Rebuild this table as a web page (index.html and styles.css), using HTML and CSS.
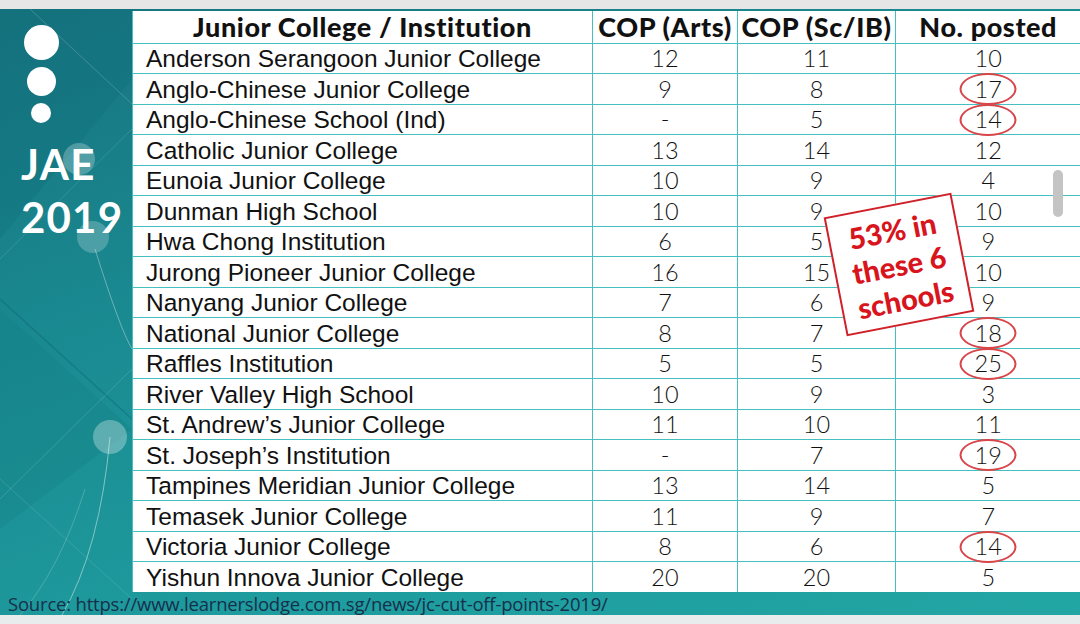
FILE: index.html
```html
<!DOCTYPE html>
<html>
<head>
<meta charset="utf-8">
<link rel="stylesheet" href="styles.css">
</head>
<body>
<div class="topstrip"></div>
<div class="slide">
  <svg class="deco" width="1080" height="606" viewBox="0 0 1080 606">
    <polygon points="0,0 132,0 132,70 0,230" fill="#0f6f7a" opacity="0.35"/>
    <polygon points="0,300 132,420 0,520" fill="#0e7a80" opacity="0.25"/>
    <line x1="30" y1="0" x2="132" y2="95" stroke="#ffffff" stroke-opacity="0.18" stroke-width="1"/>
    <line x1="0" y1="250" x2="132" y2="120" stroke="#ffffff" stroke-opacity="0.12" stroke-width="1"/>
    <line x1="0" y1="290" x2="132" y2="410" stroke="#0a5f68" stroke-opacity="0.35" stroke-width="1.5"/>
    <line x1="0" y1="490" x2="132" y2="360" stroke="#ffffff" stroke-opacity="0.15" stroke-width="1"/>
    <line x1="0" y1="470" x2="132" y2="590" stroke="#ffffff" stroke-opacity="0.12" stroke-width="1"/>
    <path d="M95 240 Q120 320 132 340" stroke="#ffffff" stroke-opacity="0.35" fill="none" stroke-width="1"/>
    <path d="M110 428 Q100 540 62 606" stroke="#ffffff" stroke-opacity="0.45" fill="none" stroke-width="1"/>
    <path d="M20 606 Q60 560 85 480" stroke="#ffffff" stroke-opacity="0.2" fill="none" stroke-width="1"/>
    <circle cx="79" cy="150" r="16" fill="#ffffff" fill-opacity="0.25"/>
    <circle cx="93" cy="228" r="16" fill="#ffffff" fill-opacity="0.22"/>
    <circle cx="110" cy="428" r="17" fill="#ffffff" fill-opacity="0.3"/>
  </svg>
  <div class="body">
    <aside class="side">
      <div class="dots">
        <span class="dot d1"></span>
        <span class="dot d2"></span>
        <span class="dot d3"></span>
      </div>
      <div class="title">JAE<br>2019</div>
    </aside>
    <div class="tablewrap">
      <table class="data">
        <colgroup>
          <col class="c1"><col class="c2"><col class="c3"><col class="c4">
        </colgroup>
        <thead>
          <tr><th>Junior College / Institution</th><th>COP (Arts)</th><th>COP (Sc/IB)</th><th>No. posted</th></tr>
        </thead>
        <tbody>
          <tr><td class="nm">Anderson Serangoon Junior College</td><td>12</td><td>11</td><td>10</td></tr>
          <tr><td class="nm">Anglo-Chinese Junior College</td><td>9</td><td>8</td><td><span class="ring">17</span></td></tr>
          <tr><td class="nm">Anglo-Chinese School (Ind)</td><td>-</td><td>5</td><td><span class="ring">14</span></td></tr>
          <tr><td class="nm">Catholic Junior College</td><td>13</td><td>14</td><td>12</td></tr>
          <tr><td class="nm">Eunoia Junior College</td><td>10</td><td>9</td><td>4</td></tr>
          <tr><td class="nm">Dunman High School</td><td>10</td><td>9</td><td>10</td></tr>
          <tr><td class="nm">Hwa Chong Institution</td><td>6</td><td>5</td><td>9</td></tr>
          <tr><td class="nm">Jurong Pioneer Junior College</td><td>16</td><td>15</td><td>10</td></tr>
          <tr><td class="nm">Nanyang Junior College</td><td>7</td><td>6</td><td>9</td></tr>
          <tr><td class="nm">National Junior College</td><td>8</td><td>7</td><td><span class="ring">18</span></td></tr>
          <tr><td class="nm">Raffles Institution</td><td>5</td><td>5</td><td><span class="ring">25</span></td></tr>
          <tr><td class="nm">River Valley High School</td><td>10</td><td>9</td><td>3</td></tr>
          <tr><td class="nm">St. Andrew’s Junior College</td><td>11</td><td>10</td><td>11</td></tr>
          <tr><td class="nm">St. Joseph’s Institution</td><td>-</td><td>7</td><td><span class="ring">19</span></td></tr>
          <tr><td class="nm">Tampines Meridian Junior College</td><td>13</td><td>14</td><td>5</td></tr>
          <tr><td class="nm">Temasek Junior College</td><td>11</td><td>9</td><td>7</td></tr>
          <tr><td class="nm">Victoria Junior College</td><td>8</td><td>6</td><td><span class="ring">14</span></td></tr>
          <tr><td class="nm">Yishun Innova Junior College</td><td>20</td><td>20</td><td>5</td></tr>
        </tbody>
      </table>
      <div class="stamp">53% in<br>these 6<br>schools</div>
      <div class="scrollthumb"></div>
    </div>
  </div>
  <div class="source">Source: https://www.learnerslodge.com.sg/news/jc-cut-off-points-2019/</div>
</div>
<div class="botstrip"></div>
</body>
</html>
```

FILE: styles.css
```css
html, body {
  margin: 0;
  padding: 0;
  width: 1080px;
  height: 624px;
  overflow: hidden;
  background: #e8e8e8;
}

.topstrip {
  height: 9px;
  background: #e6e6e6;
}

.botstrip {
  height: 9px;
  background: #e9ecec;
}

.slide {
  position: relative;
  height: 606px;
  background: linear-gradient(160deg, #17727e 0%, #1a8a91 35%, #1e9c9e 70%, #22a6a4 100%);
  display: flex;
  flex-direction: column;
}

.deco {
  position: absolute;
  left: 0;
  top: 0;
}

.body {
  position: relative;
  display: flex;
  padding-top: 2px;
}

.side {
  width: 132px;
  flex: none;
  display: flex;
  flex-direction: column;
  align-items: flex-start;
}

.dots {
  width: 82px;
  display: flex;
  flex-direction: column;
  align-items: center;
  gap: 7px;
  padding-top: 14px;
}

.dot {
  display: block;
  background: #ffffff;
  border-radius: 50%;
}
.d1 { width: 35px; height: 35px; }
.d2 { width: 29px; height: 29px; }
.d3 { width: 20px; height: 20px; }

.title {
  margin-top: 15px;
  padding-left: 21px;
  font-family: "Lato", "Liberation Sans", sans-serif;
  font-weight: 700;
  font-size: 42px;
  line-height: 53px;
  color: #ffffff;
  letter-spacing: 1.2px;
}

.tablewrap {
  position: relative;
  flex: 1;
}

.data {
  width: 948px;
  border-collapse: collapse;
  background: #ffffff;
  table-layout: fixed;
  color: #111111;
}

.c1 { width: 460px; }
.c2 { width: 145px; }
.c3 { width: 158px; }
.c4 { width: 185px; }

.data th, .data td {
  border: 1.5px solid #45bfc0;
  padding: 0;
  text-align: center;
  white-space: nowrap;
}

.data tr:first-child th { border-top: none; }
.data th:last-child, .data td:last-child { border-right: none; }
.data tr:last-child td { border-bottom: none; }

.data thead tr { height: 32px; }
.data tbody tr { height: 30.5px; }

.data th {
  font-family: "Lato", "Liberation Sans", sans-serif;
  font-weight: 900;
  font-size: 27px;
  line-height: 28px;
  letter-spacing: 0.6px;
}

.data td {
  padding-top: 1px;
  font-family: "Lato", "Liberation Sans", sans-serif;
  font-weight: 300;
  font-size: 23.5px;
  line-height: 27px;
}

.data td.nm {
  text-align: left;
  padding-left: 13px;
  font-family: "Liberation Sans", Arial, sans-serif;
  font-weight: 400;
  font-size: 24.5px;
  line-height: 27px;
}

.ring {
  position: relative;
  display: inline-block;
}

.ring::after {
  content: "";
  position: absolute;
  left: 50%;
  top: 50%;
  width: 53px;
  height: 28px;
  transform: translate(-50%, -50%);
  border: 2.5px solid #d8464a;
  border-radius: 50%;
}

.stamp {
  position: absolute;
  left: 702px;
  top: 193px;
  width: 130px;
  height: 121px;
  box-sizing: border-box;
  border: 2.5px solid #d0202a;
  background: #ffffff;
  transform: rotate(-11deg);
  display: flex;
  align-items: center;
  justify-content: center;
  text-align: center;
  font-family: "Lato", "Liberation Sans", sans-serif;
  font-weight: 900;
  font-size: 29px;
  line-height: 35px;
  color: #d8141c;
}

.scrollthumb {
  position: absolute;
  left: 921px;
  top: 159px;
  width: 10px;
  height: 47px;
  border-radius: 5px;
  background: #c4c4c4;
}

.source {
  position: relative;
  padding: 1px 0 0 8px;
  font-family: "Open Sans", "Liberation Sans", sans-serif;
  font-size: 18.5px;
  line-height: 22px;
  color: #16304c;
  letter-spacing: -0.2px;
}
```
